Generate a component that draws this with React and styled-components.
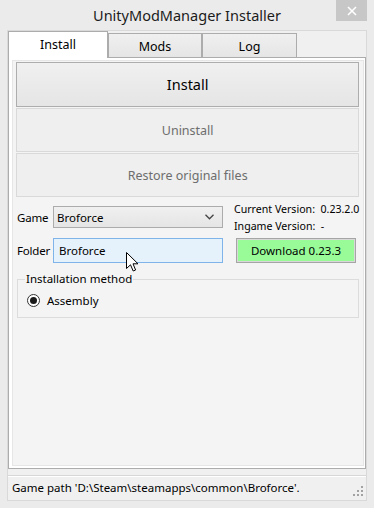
import React from 'react';
import styled, { createGlobalStyle, css } from 'styled-components';

const GlobalStyle = createGlobalStyle`
	html, body {
		margin: 0;
		padding: 0;
		background: #ebebeb;
	}
	* {
		box-sizing: border-box;
	}
`;

const uiFont = `'Noto Sans', 'Open Sans', sans-serif`;

const App = () => {
	return (
		<Window>
			<GlobalStyle />
			<TitleBar>
				<Title>UnityModManager Installer</Title>
				<CloseButton>
					<svg width='10' height='10' viewBox='0 0 10 10'>
						<path d='M1 1 L9 9 M9 1 L1 9' stroke='#fff' strokeWidth='1.6' />
					</svg>
				</CloseButton>
			</TitleBar>
			<Client>
				<TabArea>
					<TabStrip>
						<Tab active width={100}>Install</Tab>
						<Tab width={94}>Mods</Tab>
						<Tab width={95}>Log</Tab>
					</TabStrip>
					<TabBody>
						<Page>
							<BigButton>Install</BigButton>
							<PageButton>Uninstall</PageButton>
							<PageButton>Restore original files</PageButton>
							<Settings>
								<Fields>
									<FieldRow>
										<Label>Game</Label>
										<Combo>
											<span>Broforce</span>
											<svg width='9' height='6' viewBox='0 0 9 6'>
												<path d='M0.5 0.8 L4.5 4.8 L8.5 0.8' stroke='#444' strokeWidth='1.3' fill='none' />
											</svg>
										</Combo>
									</FieldRow>
									<FieldRow tall>
										<Label>Folder</Label>
										<TextBox>Broforce</TextBox>
									</FieldRow>
								</Fields>
								<Side>
									<Versions>
										<div>Current Version:&nbsp; 0.23.2.0</div>
										<div>Ingame Version:&nbsp; -</div>
									</Versions>
									<DownloadButton>Download 0.23.3</DownloadButton>
								</Side>
							</Settings>
							<GroupBox>
								<legend>Installation method</legend>
								<RadioRow>
									<Radio />
									<span>Assembly</span>
								</RadioRow>
							</GroupBox>
						</Page>
					</TabBody>
				</TabArea>
				<StatusBar>
					<span>Game path 'D:\Steam\steamapps\common\Broforce'.</span>
					<svg width='11' height='11' viewBox='0 0 11 11'>
						<rect x='8' y='0' width='2' height='2' fill='#a2a2a2' />
						<rect x='4' y='4' width='2' height='2' fill='#a2a2a2' />
						<rect x='8' y='4' width='2' height='2' fill='#a2a2a2' />
						<rect x='0' y='8' width='2' height='2' fill='#a2a2a2' />
						<rect x='4' y='8' width='2' height='2' fill='#a2a2a2' />
						<rect x='8' y='8' width='2' height='2' fill='#a2a2a2' />
					</svg>
				</StatusBar>
			</Client>
			<Cursor width='13' height='20' viewBox='0 0 13 20'>
				<path
					d='M0.5 0.5 L0.5 16.5 L4.5 12.8 L7.2 19 L9.6 18 L7 11.8 L12 11.8 Z'
					fill='#fff'
					stroke='#000'
					strokeWidth='1'
					strokeLinejoin='miter'
				/>
			</Cursor>
		</Window>
	);
};

const Window = styled.div`
	position: relative;
	width: 374px;
	height: 508px;
	background: #ebebeb;
	padding: 0 7px 7px 7px;
	display: flex;
	flex-direction: column;
	font-family: ${uiFont};
	font-size: 11.5px;
	color: #000;
`;

const TitleBar = styled.div`
	position: relative;
	height: 30px;
	flex-shrink: 0;
	display: flex;
	align-items: center;
	justify-content: center;
`;

const Title = styled.div`
	font-size: 14.5px;
	color: #1b1b1b;
`;

const CloseButton = styled.div`
	position: absolute;
	top: 0;
	right: 0;
	width: 31px;
	height: 21px;
	background: #c7c7c7;
	display: flex;
	align-items: center;
	justify-content: center;
`;

const Client = styled.div`
	flex: 1;
	border: 1px solid #d9d9d9;
	background: #f0f0f0;
	display: flex;
	flex-direction: column;
`;

const TabArea = styled.div`
	height: 438px;
	flex-shrink: 0;
	display: flex;
	flex-direction: column;
`;

const TabStrip = styled.div`
	height: 26px;
	flex-shrink: 0;
	display: flex;
	align-items: flex-end;
	position: relative;
	z-index: 1;
`;

const Tab = styled.div`
	width: ${props => props.width}px;
	height: 24px;
	border: 1px solid #acacac;
	border-bottom: none;
	display: flex;
	align-items: center;
	justify-content: center;
	font-size: 12.5px;
	background: linear-gradient(#f0f0f0, #e5e5e5);
	padding-top: 1px;

	${props =>
		props.active &&
		css`
			height: 27px;
			margin-bottom: -1px;
			background: #fff;
			padding-top: 0;
			padding-bottom: 2px;
		`};
`;

const TabBody = styled.div`
	flex: 1;
	border: 1px solid #acacac;
	background: #fff;
	padding: 2px 2px 2px 3px;
	display: flex;
`;

const Page = styled.div`
	flex: 1;
	background: #f4f4f4;
	border: 1px solid #e6e6e6;
	padding: 1px 4px 0 3px;
	display: flex;
	flex-direction: column;
`;

const BigButton = styled.div`
	height: 45px;
	flex-shrink: 0;
	border: 1px solid #adadad;
	background: linear-gradient(#f0f0f0, #e5e5e5);
	display: flex;
	align-items: center;
	justify-content: center;
	font-size: 14.5px;
	padding-bottom: 2px;
`;

const PageButton = styled.div`
	height: 44px;
	flex-shrink: 0;
	margin-top: 1px;
	border: 1px solid #d9d9d9;
	background: #efefef;
	color: #6d6d6d;
	display: flex;
	align-items: center;
	justify-content: center;
	font-size: 12.5px;
`;

const Settings = styled.div`
	margin-top: 9px;
	padding-left: 1px;
	display: flex;
	align-items: flex-start;
`;

const Fields = styled.div`
	display: flex;
	flex-direction: column;
	gap: 10px;
`;

const FieldRow = styled.div`
	display: flex;
	align-items: center;
	height: ${props => (props.tall ? 25 : 22)}px;
`;

const Label = styled.div`
	width: 36px;
	letter-spacing: -0.2px;
`;

const Combo = styled.div`
	width: 170px;
	height: 22px;
	border: 1px solid #acacac;
	background: linear-gradient(#f0f0f0, #e5e5e5);
	display: flex;
	align-items: center;
	justify-content: space-between;
	padding: 0 8px 0 3px;
`;

const TextBox = styled.div`
	width: 170px;
	height: 25px;
	border: 1px solid #7eb4ea;
	background: #e5f1fb;
	display: flex;
	align-items: center;
	padding-left: 5px;
`;

const Side = styled.div`
	margin-left: 11px;
	margin-top: -5px;
	display: flex;
	flex-direction: column;
	white-space: nowrap;
`;

const Versions = styled.div`
	line-height: 17px;
	height: 37px;
	font-size: 10.6px;
`;

const DownloadButton = styled.div`
	margin-left: 2px;
	width: 120px;
	height: 25px;
	border: 1px solid #a5a5a5;
	box-shadow: inset 0 0 0 1px #d8d8d8;
	background: #98fb98;
	display: flex;
	align-items: center;
	justify-content: center;
`;

const GroupBox = styled.fieldset`
	margin: 9px 0 0 1px;
	width: 342px;
	height: 46px;
	border: 1px solid #dcdcdc;
	padding: 3px 9px 0 9px;

	legend {
		padding: 0 1px;
		margin-left: -2px;
		line-height: 14px;
	}
`;

const RadioRow = styled.div`
	display: flex;
	align-items: center;
	gap: 7px;
	height: 22px;
`;

const Radio = styled.span`
	width: 13px;
	height: 13px;
	border-radius: 50%;
	border: 1px solid #333;
	background: #fff;
	display: flex;
	align-items: center;
	justify-content: center;

	&::after {
		content: '';
		width: 7px;
		height: 7px;
		border-radius: 50%;
		background: #1a1a1a;
	}
`;

const StatusBar = styled.div`
	margin-top: 6px;
	flex: 1;
	border-top: 1px solid #d7d7d7;
	box-shadow: inset 0 1px 0 #fff;
	display: flex;
	align-items: center;
	justify-content: space-between;
	padding: 0 2px 1px 4px;
	font-size: 11.5px;

	svg {
		align-self: flex-end;
		margin-bottom: 2px;
	}
`;

const Cursor = styled.svg`
	position: absolute;
	left: 126px;
	top: 252px;
`;

export default App;
